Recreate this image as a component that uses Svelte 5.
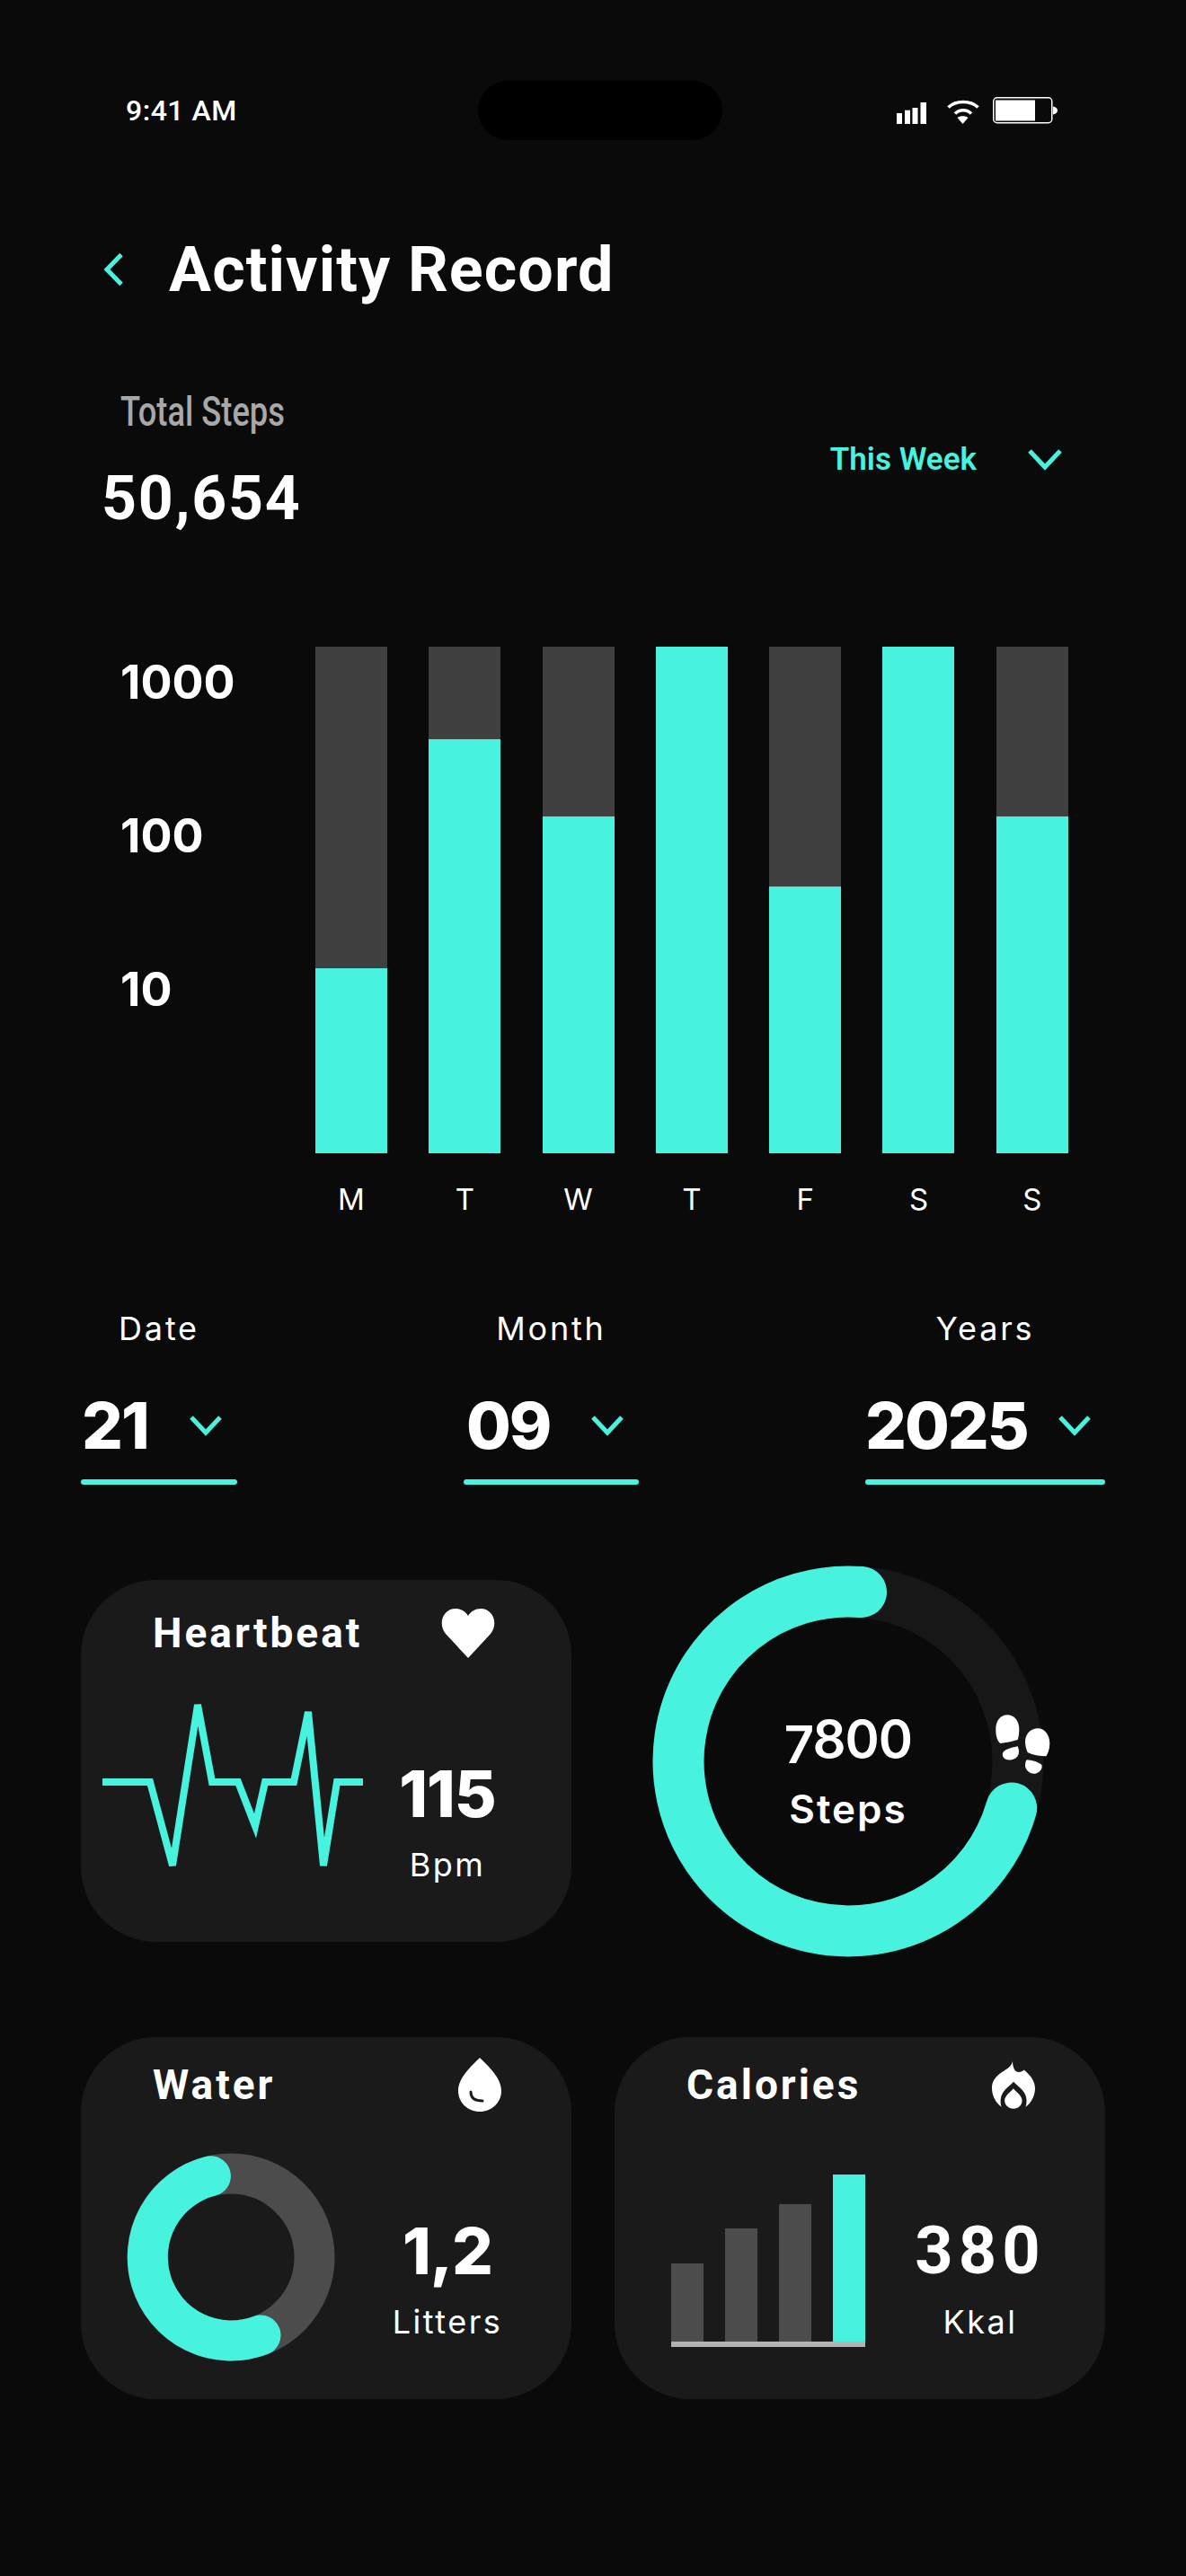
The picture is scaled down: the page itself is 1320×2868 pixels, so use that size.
<script>
  // chart data: teal share of each bar's 564px track
  const days = [
    { day: 'M', fill: 206 },
    { day: 'T', fill: 461 },
    { day: 'W', fill: 375 },
    { day: 'T', fill: 564 },
    { day: 'F', fill: 297 },
    { day: 'S', fill: 564 },
    { day: 'S', fill: 375 }
  ];
  const dates = [
    { label: 'Date', value: '21', cls: 'date' },
    { label: 'Month', value: '09', cls: 'month' },
    { label: 'Years', value: '2025', cls: 'year' }
  ];
  const calories = [87, 126, 153, 186];
</script>

<main class="screen">
  <!-- status bar -->
  <header class="status">
    <span class="time">9:41 AM</span>
    <div class="island"></div>
    <div class="sys">
      <svg class="signal" width="34" height="24" viewBox="0 0 34 24" aria-hidden="true">
        <rect x="0" y="12" width="6" height="12" fill="#fff" />
        <rect x="9" y="8.700" width="6" height="15.300" fill="#fff" />
        <rect x="17.500" y="6" width="6" height="18" fill="#fff" />
        <rect x="26.500" y="0" width="6.500" height="24" fill="#fff" />
      </svg>
      <svg width="36" height="27" viewBox="0 0 36 27" aria-hidden="true">
        <path d="M1.500 8.500C10 .5 26 .5 34.500 8.500M9 15.500C14 10.500 22 10.500 27 15.500" fill="none" stroke="#fff" stroke-width="3.600" />
        <path d="M17.500 27L11.500 20C14.500 17.500 20.500 17.500 23.500 20Z" fill="#fff" />
      </svg>
      <svg width="72" height="30" viewBox="0 0 72 30" aria-hidden="true">
        <rect x=".75" y=".75" width="65" height="28" rx="4" fill="none" stroke="#fff" stroke-width="1.500" />
        <rect x="3" y="3.500" width="44" height="23" fill="#fff" />
        <path d="M67 10.500c3.500.5 5 2.500 5 4.500s-1.500 4-5 4.500z" fill="#fff" />
      </svg>
    </div>
  </header>

  <!-- title -->
  <div class="title-row">
    <svg class="back" width="23" height="36" viewBox="0 0 23 36" aria-hidden="true">
      <path d="M20 1.500 L4 18 L20 34.500" fill="none" stroke="#47f3df" stroke-width="5" />
    </svg>
    <h1>Activity Record</h1>
  </div>

  <!-- total -->
  <section class="total">
    <div>
      <p class="total-label">Total Steps</p>
      <p class="total-value">50,654</p>
    </div>
    <div class="range">
      <span>This Week</span>
      <svg width="38" height="24" viewBox="0 0 38 24" aria-hidden="true">
        <path d="M2 2 L19 20 L36 2" fill="none" stroke="#47f3df" stroke-width="5" />
      </svg>
    </div>
  </section>

  <!-- weekly chart -->
  <section class="chart">
    <div class="scale">
      <span>1000</span>
      <span>100</span>
      <span>10</span>
    </div>
    <div class="bars">
      {#each days as d}
        <div class="col">
          <div class="track">
            <div class="fill" style="height: {d.fill}px"></div>
          </div>
          <span class="day">{d.day}</span>
        </div>
      {/each}
    </div>
  </section>

  <!-- date pickers -->
  <section class="dates">
    {#each dates as d}
      <div class="picker {d.cls}">
        <span class="picker-label">{d.label}</span>
        <div class="picker-value">
          <span>{d.value}</span>
          <svg width="36" height="23" viewBox="0 0 36 23" aria-hidden="true">
            <path d="M2 2 L18 19 L34 2" fill="none" stroke="#47f3df" stroke-width="5" />
          </svg>
        </div>
        <div class="rule"></div>
      </div>
    {/each}
  </section>

  <!-- cards -->
  <section class="cards">
    <article class="card heart">
      <div class="card-head">
        <h2>Heartbeat</h2>
        <svg width="62" height="56" viewBox="0 0 62 56" aria-hidden="true">
          <path d="M31 56 L6 29C-3 18 3 1 17 1C23 1 28 4 31 9C34 4 39 1 45 1C59 1 65 18 56 29Z" fill="#fff" />
        </svg>
      </div>
      <svg class="ecg" width="290" height="190" viewBox="114 1893 290 190" aria-hidden="true">
        <polyline points="114,1984 167,1984 192,2077 220,1898 236,1984 265,1984 284,2033 295,1984 327,1984 343,1906 360,2077 375,1984 404,1984" fill="none" stroke="#47f3df" stroke-width="8" stroke-miterlimit="4" />
      </svg>
      <div class="stat">
        <strong>115</strong>
        <span>Bpm</span>
      </div>
    </article>

    <div class="ring">
      <svg width="436" height="436" viewBox="0 0 436 436" aria-hidden="true">
        <circle cx="218" cy="218" r="189" fill="none" stroke="#171717" stroke-width="57" />
        <path d="M232.500 29.500 A189 189 0 1 0 399.700 270" fill="none" stroke="#47f3df" stroke-width="57" stroke-linecap="round" />
      </svg>
      <div class="ring-text">
        <strong><span class="seven">7</span>800</strong>
        <span>Steps</span>
      </div>
      <svg class="feet" width="64" height="70" viewBox="0 0 64 70" aria-hidden="true">
        <path fill="#fff" d="M7.300 34C3 30 2.300 24 2.300 18C2.300 9 7.500 2.300 15 2.300C23 2.300 28.300 9 28.300 18C28.300 22 28 26 26.700 30C21 32 13 33 7.300 34Z" />
        <path fill="#fff" d="M26.700 37.300C28.500 42 28.500 46 26 49C23 52.500 17 53.500 13 51.500C9.500 49.500 9 46 11 43C14 40 21 38.500 26.700 37.300Z" />
        <path fill="#fff" d="M37.700 44C36 40 35 36 35 32C35 24 41 17.300 49 17.300C57 17.300 62.300 25 62.300 34C62.300 40 60.500 45 58.300 48.300C51 48 43.500 47 37.700 44Z" />
        <path fill="#fff" d="M36.700 52.300C42 52.500 49 54.500 53 57.500C55 61 52 66 47 67.500C41 69 35.500 64 35 59C35 56 35.500 54 36.700 52.300Z" />
      </svg>
    </div>

    <article class="card water">
      <div class="card-head">
        <h2>Water</h2>
        <svg width="48" height="60" viewBox="0 0 48 60" fill="none" aria-hidden="true">
          <path d="M24 0C33 9 48 22 48 37C48 50 37 60 24 60C11 60 0 50 0 37C0 22 15 9 24 0Z" fill="#fff" />
          <path d="M14 38C14 44 18 48 27 48" stroke="#1a1a1a" stroke-width="3" stroke-linecap="round" />
        </svg>
      </div>
      <svg class="donut" width="232" height="232" viewBox="0 0 232 232" aria-hidden="true">
        <circle cx="116" cy="116" r="93" fill="none" stroke="#4c4c4c" stroke-width="45" />
        <path d="M93.400 25.800 A93 93 0 1 0 149 203" fill="none" stroke="#47f3df" stroke-width="45" stroke-linecap="round" />
      </svg>
      <div class="stat">
        <strong>1,2</strong>
        <span>Litters</span>
      </div>
    </article>

    <article class="card cal">
      <div class="card-head">
        <h2>Calories</h2>
        <svg width="48" height="54" viewBox="14.300 12.300 48.200 53.700" aria-hidden="true">
          <path fill="#fff" d="M37.300 12.300C37.500 17 38.500 22 41 24C44 26 48 25 50 22.500C57 28 62.500 35 62.500 43C62.500 51 59 59 52 64C54 58 53 52 50 47.500C47 43 42 40 38.500 36C35 40 30 43 27 47.500C24 52 23 58 25 64C18 59 14.300 51 14.300 43C14.300 28 30 24 35 18C36.500 16 37.300 14 37.300 12.300Z" />
          <path fill="#fff" d="M38.300 43.300C42 48 48 51 48 57C48 62 44 66 38.300 66C33 66 28.500 62 28.500 57C28.500 51 34.500 48 38.300 43.300Z" />
        </svg>
      </div>
      <div class="mini-bars">
        {#each calories as h, i}
          <div class="mini" class:on={i === 3} style="height: {h}px"></div>
        {/each}
      </div>
      <div class="stat">
        <strong>380</strong>
        <span>Kkal</span>
      </div>
    </article>
  </section>
</main>

<style>
  :global(body) {
    margin: 0;
    background: #0a0a0a;
  }

  .screen {
    width: 1320px;
    height: 2868px;
    box-sizing: border-box;
    background: #0a0a0a;
    color: #fff;
    font-family: Inter, sans-serif;
    overflow: hidden;
  }

  p, h1, h2 {
    margin: 0;
  }

  /* status bar */
  .status {
    position: relative;
    height: 66px;
    padding: 90px 0 0 532px;
    display: flex;
  }

  .time {
    position: absolute;
    left: 140px;
    top: 102px;
    font: 500 32px/42px Roboto, sans-serif;
    letter-spacing: 0.5px;
  }

  .island {
    width: 272px;
    height: 66px;
    border-radius: 33px;
    background: #000;
  }

  .sys {
    position: absolute;
    left: 998px;
    top: 108px;
    display: flex;
    align-items: flex-end;
    gap: 15px;
  }

  .signal {
    margin-right: 7px;
  }

  /* title */
  .title-row {
    display: flex;
    align-items: center;
    gap: 50px;
    margin: 101px 0 0 115px;
    height: 86px;
  }

  h1 {
    font: 700 70px/86px Roboto, sans-serif;
    letter-spacing: 1.100px;
  }

  /* total */
  .total {
    display: flex;
    justify-content: space-between;
    padding: 0 138px 0 113px;
    margin-top: 87px;
  }

  .total-label {
    margin-left: 21px;
    font: 500 46px/56px Roboto, sans-serif;
    color: #a8a8a8;
    transform: scaleX(0.79);
    transform-origin: left;
  }

  .total-value {
    margin-top: 29px;
    font: 700 68px/80px Roboto, sans-serif;
    letter-spacing: 1.800px;
  }

  .range {
    display: flex;
    align-items: center;
    gap: 57px;
    height: 44px;
    margin-top: 60px;
    color: #47f3df;
    font: 600 35px/44px Roboto, sans-serif;
  }

  /* chart */
  .chart {
    display: flex;
    margin-top: 125px;
    padding-left: 134px;
  }

  .scale {
    width: 217px;
    display: flex;
    flex-direction: column;
    gap: 107px;
    padding-top: 8px;
    box-sizing: border-box;
    font: 700 52px/64px Inter, sans-serif;
  }

  .bars {
    display: flex;
    gap: 46.300px;
  }

  .col {
    width: 80px;
    display: flex;
    flex-direction: column;
    align-items: center;
  }

  .track {
    width: 100%;
    height: 564px;
    display: flex;
    align-items: flex-end;
    background: #404040;
  }

  .fill {
    width: 100%;
    background: #47f3df;
  }

  .day {
    margin-top: 29px;
    font: 400 33px/44px Inter, sans-serif;
  }

  /* date pickers */
  .dates {
    display: flex;
    margin-top: 100px;
    padding-left: 90px;
  }

  .picker {
    display: flex;
    flex-direction: column;
  }

  .date { width: 174px; }
  .month { width: 195px; margin-left: 252px; }
  .year { width: 267px; margin-left: 252px; }

  .picker-label {
    font: 400 36px/44px Inter, sans-serif;
    letter-spacing: 2.800px;
    text-align: center;
  }

  .picker-value {
    display: flex;
    align-items: center;
    margin-top: 46px;
    font: 800 72px/80px Inter, sans-serif;
    letter-spacing: -2px;
  }

  .date .picker-value { gap: 46px; padding-left: 1px; }
  .month .picker-value { gap: 46px; padding-left: 3px; }
  .year .picker-value { gap: 34px; padding-left: 0; }

  .rule {
    height: 6px;
    margin-top: 20px;
    border-radius: 3px;
    background: #47f3df;
  }

  /* cards */
  .cards {
    display: grid;
    grid-template-columns: 546px 546px;
    column-gap: 48px;
    margin: 106px 0 0 90px;
  }

  .card {
    height: 403px;
    box-sizing: border-box;
    background: #1a1a1a;
    border-radius: 84px;
    padding: 23px 78px 0 80px;
    position: relative;
  }

  .heart { padding: 29px 84px 0 80px; }
  .water, .cal { margin-top: 89px; }

  .card-head {
    display: flex;
    justify-content: space-between;
    align-items: center;
    height: 60px;
  }

  h2 {
    font: 700 46px/60px Roboto, sans-serif;
    letter-spacing: 3px;
  }

  .ecg { position: absolute; left: 24px; top: 134px; }
  .donut { position: absolute; left: 51px; top: 129px; }

  .stat {
    position: absolute;
    top: 198px;
    left: 308px;
    display: flex;
    flex-direction: column;
    align-items: center;
    width: 200px;
  }

  .stat strong {
    font: 800 72px/80px Inter, sans-serif;
    letter-spacing: -1px;
  }

  .stat span {
    margin-top: 17px;
    font: 400 36px/44px Inter, sans-serif;
    letter-spacing: 2.500px;
  }

  .cal .stat { left: 307px; }
  .cal .stat strong {
    font-family: Roboto, sans-serif;
    font-weight: 700;
    font-size: 74px;
    letter-spacing: 6px;
  }

  .mini-bars {
    position: absolute;
    left: 63px;
    top: 153px;
    width: 216px;
    height: 192px;
    box-sizing: border-box;
    border-bottom: 6px solid #b3b3b3;
    display: flex;
    align-items: flex-end;
    justify-content: space-between;
  }

  .mini {
    width: 36px;
    background: #4c4c4c;
  }

  .mini.on {
    background: #47f3df;
  }

  /* steps ring */
  .ring {
    position: relative;
    margin: -16px 0 0 42px;
    width: 436px;
    height: 436px;
  }

  .ring-text {
    position: absolute;
    left: 0;
    right: 0;
    top: 157px;
    display: flex;
    flex-direction: column;
    align-items: center;
  }

  .ring-text strong {
    font: 600 58px/72px Inter, sans-serif;
    letter-spacing: -1px;
  }

  .seven {
    position: relative;
    top: 6px;
  }

  .ring-text > span {
    margin-top: 15px;
    font: 600 44px/54px Inter, sans-serif;
    letter-spacing: 2px;
  }

  .feet {
    position: absolute;
    left: 379.500px;
    top: 163.500px;
  }
</style>
